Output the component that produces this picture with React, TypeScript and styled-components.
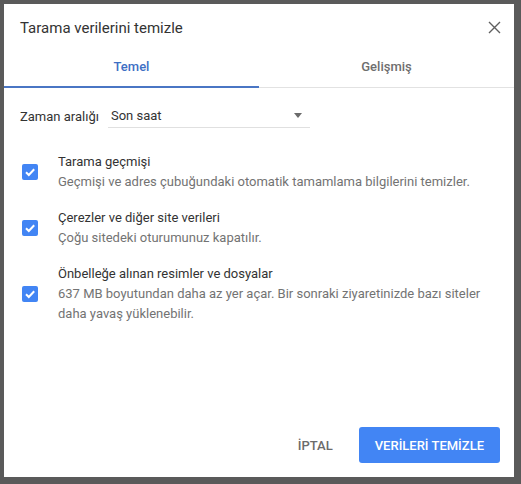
import React from "react";
import styled, { createGlobalStyle } from "styled-components";

const Global = createGlobalStyle`
  html, body { margin: 0; padding: 0; }
  body {
    background: #5a5a5a;
    font-family: Roboto, "Noto Sans", "Liberation Sans", sans-serif;
    -webkit-font-smoothing: antialiased;
  }
`;

const Backdrop = styled.div`
  width: 521px;
  height: 484px;
  box-sizing: border-box;
  padding: 4px 7px 7px 4px;
  background: #5a5a5a;
  overflow: hidden;
`;

const Dialog = styled.div`
  width: 510px;
  height: 473px;
  background: #ffffff;
  display: flex;
  flex-direction: column;
  box-sizing: border-box;
`;

const Header = styled.div`
  height: 47px;
  display: flex;
  align-items: center;
  justify-content: space-between;
  padding: 0 8px 0 16px;
`;

const Title = styled.h1`
  margin: 0;
  font-size: 15px;
  font-weight: 400;
  color: #333333;
`;

const CloseButton = styled.button`
  width: 24px;
  height: 24px;
  border: 0;
  background: transparent;
  padding: 0;
  display: flex;
  align-items: center;
  justify-content: center;
  cursor: pointer;
`;

const TabBar = styled.div`
  display: flex;
  border-bottom: 1px solid #e2e2e2;
`;

const Tab = styled.div<{ $active?: boolean }>`
  flex: 1;
  height: 37px;
  box-sizing: border-box;
  display: flex;
  align-items: center;
  justify-content: center;
  padding-bottom: 4px;
  font-size: 13px;
  font-weight: 500;
  color: ${(p) => (p.$active ? "#3e6fc4" : "#6e6e6e")};
  border-bottom: 2px solid ${(p) => (p.$active ? "#4a76c4" : "transparent")};
  margin-bottom: -1px;
`;

const Body = styled.div`
  padding: 16px 20px 0 16px;
  display: flex;
  flex-direction: column;
`;

const RangeRow = styled.div`
  display: flex;
  align-items: center;
  height: 24px;
  font-size: 13px;
  color: #333333;
`;

const RangeLabel = styled.span`
  margin-right: 9px;
`;

const Select = styled.div`
  width: 202px;
  height: 24px;
  box-sizing: border-box;
  border-bottom: 1px solid #e0e0e0;
  display: flex;
  align-items: center;
  justify-content: space-between;
  padding: 0 8px 0 3px;
  color: #333333;
`;

const Arrow = styled.span`
  width: 0;
  height: 0;
  border-left: 4px solid transparent;
  border-right: 4px solid transparent;
  border-top: 5px solid #6b6b6b;
`;

const List = styled.div`
  display: flex;
  flex-direction: column;
  gap: 15px;
  margin-top: 23px;
`;

const Item = styled.div`
  display: flex;
  align-items: center;
`;

const Box = styled.span`
  width: 16px;
  height: 16px;
  border-radius: 2px;
  background: #4285f4;
  margin-left: 2px;
  margin-right: 20px;
  flex: none;
  display: flex;
  align-items: center;
  justify-content: center;
`;

const Texts = styled.div`
  display: flex;
  flex-direction: column;
  font-size: 13px;
`;

const ItemTitle = styled.div`
  line-height: 21px;
  color: #333333;
`;

const ItemSub = styled.div`
  line-height: 20px;
  color: #737373;
  white-space: nowrap;
`;

const Footer = styled.div`
  margin-top: auto;
  display: flex;
  justify-content: flex-end;
  align-items: center;
  gap: 8px;
  padding: 0 14px 14px 0;
`;

const Button = styled.button<{ $primary?: boolean }>`
  height: 36px;
  border: 0;
  border-radius: 3px;
  font-family: inherit;
  font-size: 13px;
  font-weight: 500;
  padding: 0 ${(p) => (p.$primary ? "16px" : "18px")};
  background: ${(p) => (p.$primary ? "#4285f4" : "transparent")};
  color: ${(p) => (p.$primary ? "#ffffff" : "#6b6b6b")};
  cursor: pointer;
`;

const Check = () => (
  <svg width="12" height="12" viewBox="0 0 12 12">
    <path d="M2 6.2 L4.8 9 L10.2 3.2" fill="none" stroke="#fff" strokeWidth="2" />
  </svg>
);

const items = [
  {
    title: "Tarama geçmişi",
    sub: ["Geçmişi ve adres çubuğundaki otomatik tamamlama bilgilerini temizler."],
  },
  { title: "Çerezler ve diğer site verileri", sub: ["Çoğu sitedeki oturumunuz kapatılır."] },
  {
    title: "Önbelleğe alınan resimler ve dosyalar",
    sub: [
      "637 MB boyutundan daha az yer açar. Bir sonraki ziyaretinizde bazı siteler",
      "daha yavaş yüklenebilir.",
    ],
  },
];

export default function App() {
  return (
    <>
      <Global />
      <Backdrop>
        <Dialog>
          <Header>
            <Title>Tarama verilerini temizle</Title>
            <CloseButton aria-label="Kapat">
              <svg width="13" height="13" viewBox="0 0 13 13">
                <path d="M1 1 L12 12 M12 1 L1 12" stroke="#5f5f5f" strokeWidth="1.4" />
              </svg>
            </CloseButton>
          </Header>
          <TabBar>
            <Tab $active>Temel</Tab>
            <Tab>Gelişmiş</Tab>
          </TabBar>
          <Body>
            <RangeRow>
              <RangeLabel>Zaman aralığı</RangeLabel>
              <Select>
                <span>Son saat</span>
                <Arrow />
              </Select>
            </RangeRow>
            <List>
              {items.map((it) => (
                <Item key={it.title}>
                  <Box>
                    <Check />
                  </Box>
                  <Texts>
                    <ItemTitle>{it.title}</ItemTitle>
                    {it.sub.map((line) => (
                      <ItemSub key={line}>{line}</ItemSub>
                    ))}
                  </Texts>
                </Item>
              ))}
            </List>
          </Body>
          <Footer>
            <Button>İPTAL</Button>
            <Button $primary>VERİLERİ TEMİZLE</Button>
          </Footer>
        </Dialog>
      </Backdrop>
    </>
  );
}
